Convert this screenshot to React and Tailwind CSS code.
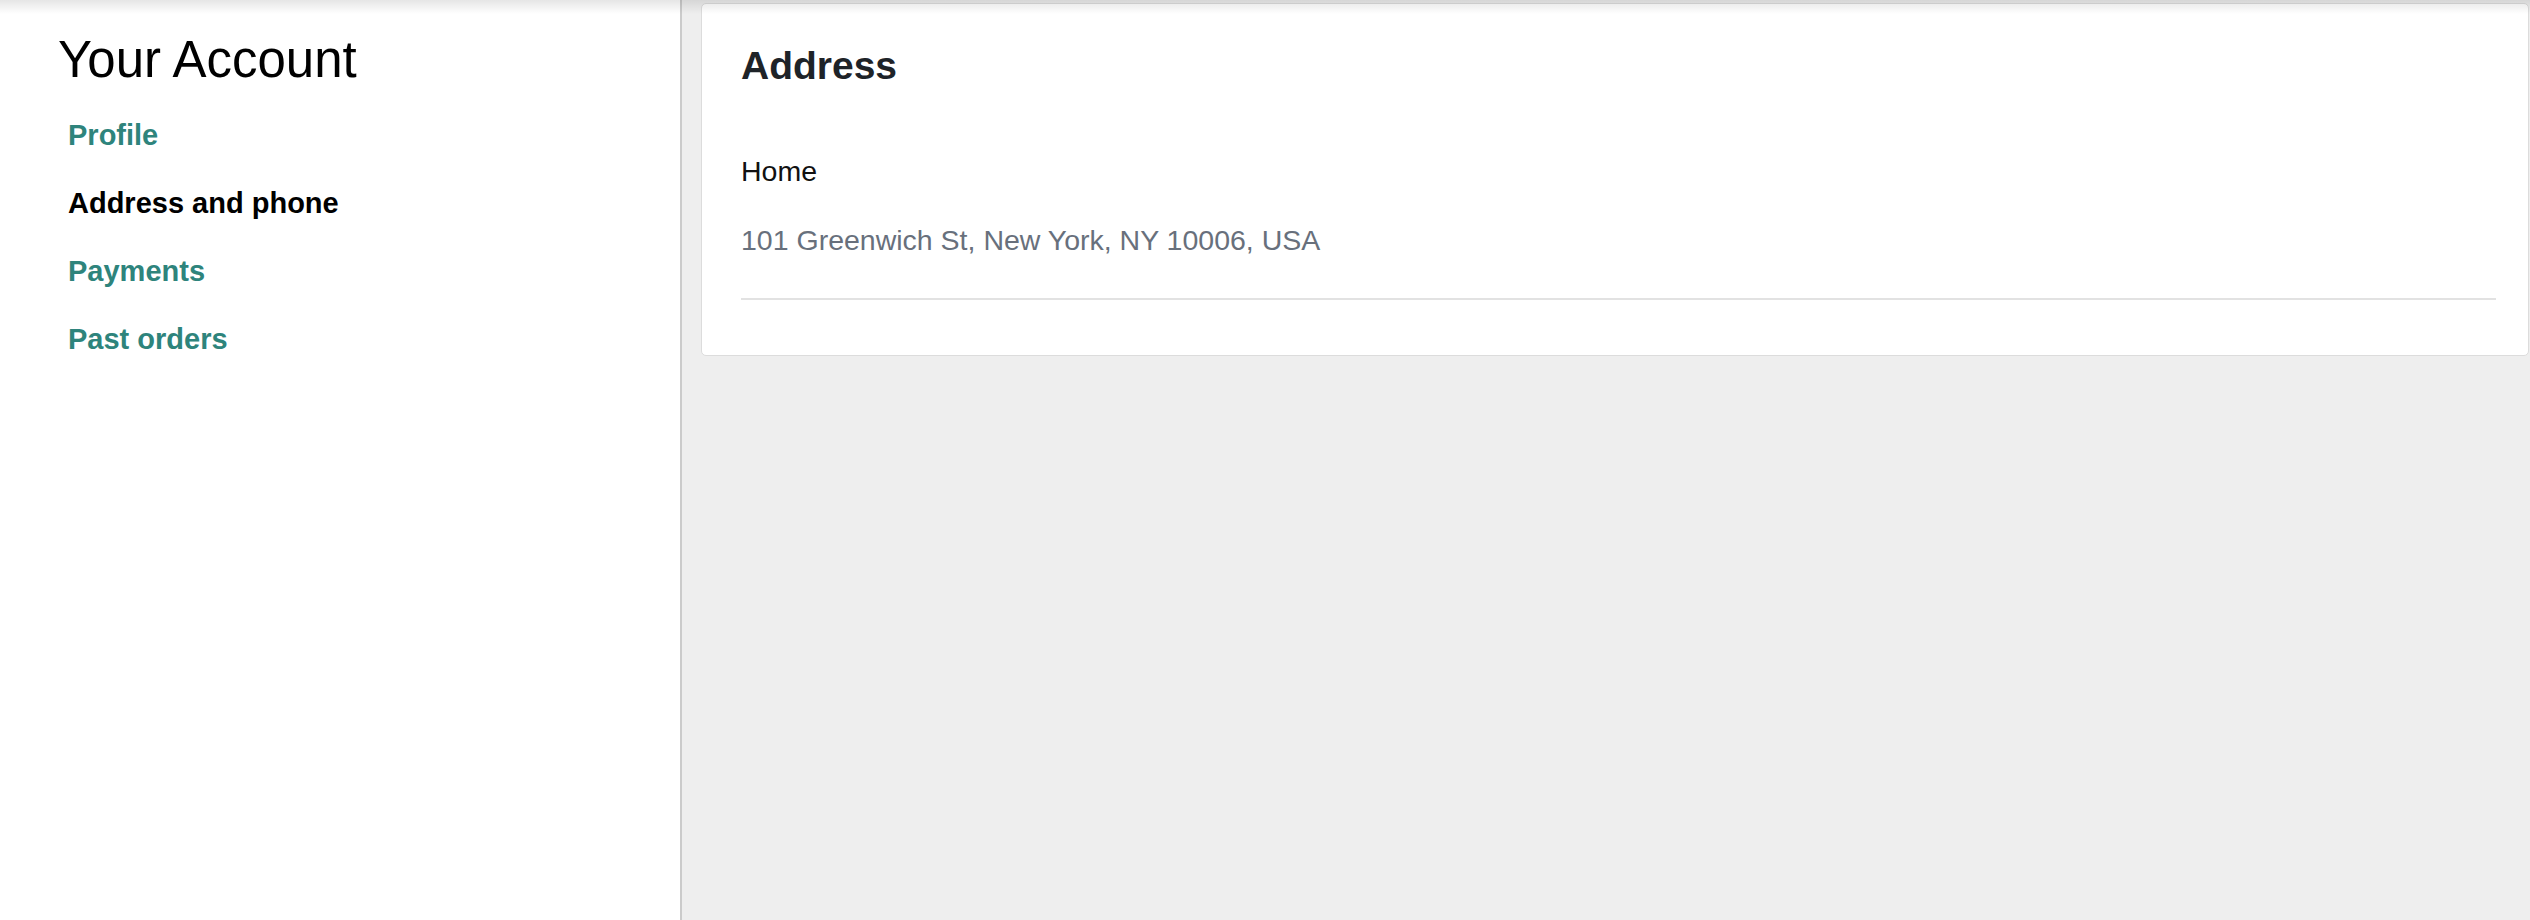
import React from 'react';

const navItems = [
  { label: 'Profile', active: false },
  { label: 'Address and phone', active: true },
  { label: 'Payments', active: false },
  { label: 'Past orders', active: false },
];

export default function App() {
  return (
    <div className="relative flex h-[920px] w-full bg-[#eeeeee] font-['Liberation_Sans',Arial,sans-serif]">
      {/* header shadow from above the viewport */}
      <div className="pointer-events-none absolute inset-x-0 top-0 h-[14px] bg-gradient-to-b from-black/10 to-transparent" />

      <aside className="w-[682px] shrink-0 border-r-2 border-[#cbcbcb] bg-white pl-[58px] pt-[31px]">
        <h1 className="text-[51px] leading-[58px] font-normal text-black">Your Account</h1>
        <nav className="mt-[28px] flex flex-col gap-[32px] pl-[10px]">
          {navItems.map(item => (
            <a
              key={item.label}
              href="#"
              className={`text-[29px] leading-[36px] font-bold ${item.active ? 'text-black' : 'text-[#2e847c]'}`}
            >
              {item.label}
            </a>
          ))}
        </nav>
      </aside>

      <main className="flex-1 pl-[19px] pr-[1px] pt-[3px]">
        <section className="rounded-[5px] border border-[#dcdcdc] bg-white pb-[55px] pl-[39px] pr-[32px] pt-[39px]">
          <h2 className="text-[39px] leading-[46px] font-bold text-[#1e2328]">Address</h2>
          <div className="mt-[65px] text-[28.5px] leading-[34px] text-[#111]">Home</div>
          <div className="mt-[35px] text-[28.5px] leading-[34px] text-[#68707c]">
            101 Greenwich St, New York, NY 10006, USA
          </div>
          <div className="mt-[41px] h-[2px] bg-[#e2e2e2]" />
        </section>
      </main>
    </div>
  );
}
